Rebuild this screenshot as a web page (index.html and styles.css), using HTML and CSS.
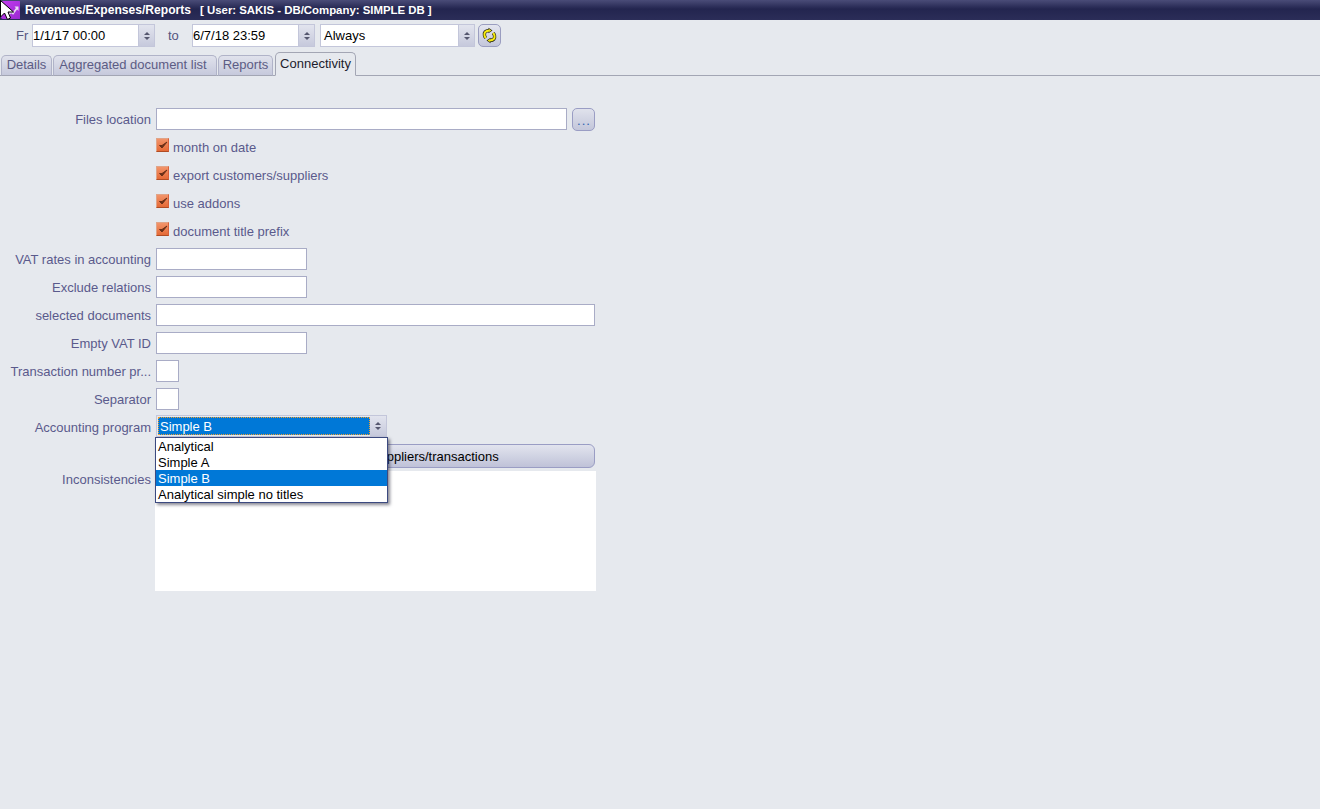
FILE: index.html
```html
<!DOCTYPE html>
<html lang="en">
<head>
<meta charset="utf-8">
<title>Revenues/Expenses/Reports</title>
<link rel="stylesheet" href="styles.css">
</head>
<body>
<div class="window">
  <header class="titlebar">
    <svg class="app-icon" width="20" height="20" viewBox="0 0 20 20"><defs><linearGradient id="ic" x1="0" y1="0" x2="1" y2="1"><stop offset="0" stop-color="#c23cf0"/><stop offset="1" stop-color="#9a28d0"/></linearGradient></defs><rect x="1" y="1" width="20" height="18" rx="2" fill="url(#ic)"/><path d="M8 15L11 12L13 13.500L17 8" fill="none" stroke="#e8d8f4" stroke-width="1.800"/><path d="M14.500 6.500h4v4.500z" fill="#e8d8f4"/></svg>
    <span class="title-main">Revenues/Expenses/Reports</span>
    <span class="title-sub">[ User: SAKIS - DB/Company: SIMPLE DB ]</span>
  </header>
  <div class="toolbar">
    <span class="tb-label from">Fr</span>
    <div class="spin date"><span class="spin-value">1/1/17 00:00</span><span class="spin-btn"><i class="up"></i><i class="down"></i></span></div>
    <span class="tb-label to">to</span>
    <div class="spin date"><span class="spin-value">6/7/18 23:59</span><span class="spin-btn"><i class="up"></i><i class="down"></i></span></div>
    <div class="spin period"><span class="spin-value">Always</span><span class="spin-btn"><i class="up"></i><i class="down"></i></span></div>
    <button class="refresh" type="button" aria-label="Refresh">
      <svg width="17" height="17" viewBox="0 0 17 17"><g fill="none" stroke="#2a2a14" stroke-width="3.400"><path d="M8 3.500Q2.500 4 3.500 8.500Q3.800 9.800 4.800 11"/><path d="M9 13.500Q14.500 13 13.500 8.500Q13.200 7.200 12.200 6"/></g><path d="M7.500 0.800L11.500 3.500L7.500 6.200zM9.500 10.800L5.500 13.500L9.500 16.200z" fill="#2a2a14"/><g fill="none" stroke="#f8ec10" stroke-width="2"><path d="M8.500 3.500Q2.500 4 3.500 8.500Q3.800 9.800 4.800 11"/><path d="M8.500 13.500Q14.500 13 13.500 8.500Q13.200 7.200 12.200 6"/></g><path d="M8.200 2L10.400 3.500L8.200 5zM8.800 12L6.600 13.500L8.800 15z" fill="#f8ec10"/></svg>
    </button>
  </div>
  <nav class="tabs">
    <span class="tab t1">Details</span>
    <span class="tab t2">Aggregated document list</span>
    <span class="tab t3">Reports</span>
    <span class="tab active">Connectivity</span>
  </nav>
  <main class="form">
    <div class="row"><label>Files location</label><div class="field wide-file"></div><button class="browse" type="button">...</button></div>
    <div class="row"><label></label><span class="check"><svg width="12" height="12" viewBox="0 0 12 12"><path d="M2.500 6.500L5 9L10 3L5 6.500z" fill="#6a3018" stroke="#6a3018"/></svg></span><span class="check-text">month on date</span></div>
    <div class="row"><label></label><span class="check"><svg width="12" height="12" viewBox="0 0 12 12"><path d="M2.500 6.500L5 9L10 3L5 6.500z" fill="#6a3018" stroke="#6a3018"/></svg></span><span class="check-text">export customers/suppliers</span></div>
    <div class="row"><label></label><span class="check"><svg width="12" height="12" viewBox="0 0 12 12"><path d="M2.500 6.500L5 9L10 3L5 6.500z" fill="#6a3018" stroke="#6a3018"/></svg></span><span class="check-text">use addons</span></div>
    <div class="row"><label></label><span class="check"><svg width="12" height="12" viewBox="0 0 12 12"><path d="M2.500 6.500L5 9L10 3L5 6.500z" fill="#6a3018" stroke="#6a3018"/></svg></span><span class="check-text">document title prefix</span></div>
    <div class="row"><label>VAT rates in accounting</label><div class="field medium"></div></div>
    <div class="row"><label>Exclude relations</label><div class="field medium"></div></div>
    <div class="row"><label>selected documents</label><div class="field full"></div></div>
    <div class="row"><label>Empty VAT ID</label><div class="field medium"></div></div>
    <div class="row"><label>Transaction number pr...</label><div class="field tiny"></div></div>
    <div class="row"><label>Separator</label><div class="field tiny"></div></div>
    <div class="row combo-row">
      <label>Accounting program</label>
      <div class="combo"><span class="combo-value">Simple B</span><span class="spin-btn"><i class="up"></i><i class="down"></i></span></div>
      <ul class="dropdown">
        <li>Analytical</li>
        <li>Simple A</li>
        <li class="selected">Simple B</li>
        <li>Analytical simple no titles</li>
      </ul>
    </div>
    <div class="row button-row"><label></label><button class="export" type="button">Check all customers/suppliers/transactions</button></div>
    <div class="row notes-row"><label>Inconsistencies</label><div class="notes"></div></div>
  </main>
</div>
<svg class="cursor" width="15" height="21" viewBox="0 0 15 21"><path d="M0.500 0.500V17L4.500 13L7.500 19.500L10.500 18L8 12H13.500z" fill="#fff" stroke="#000" stroke-width="1"/></svg>
</body>
</html>
```
FILE: styles.css
```css
* { box-sizing: border-box; }
html, body { margin: 0; height: 100%; }
body {
  background: #e6e9ee;
  font-family: "Liberation Sans", Arial, sans-serif;
  font-size: 13px;
  color: #5a5a8c;
  overflow: hidden;
  position: relative;
}
.window { height: 809px; }

.titlebar {
  height: 20px;
  display: flex;
  align-items: center;
  background: linear-gradient(#4a4c78, #23254f 45%, #2b2d58);
  color: #fff;
  font-size: 11.4px;
  font-weight: bold;
  white-space: nowrap;
}
.app-icon { flex: none; margin-right: 5px; }
.title-main { font-size: 12.1px; }
.title-sub { margin-left: 9px; }

.toolbar {
  height: 32px;
  padding-top: 4px;
  display: flex;
  align-items: flex-start;
}
.tb-label { line-height: 23px; color: #55557f; }
.tb-label.from { margin-left: 16px; width: 16px; }
.tb-label.to { margin-left: 13px; width: 24px; }
.spin {
  height: 23px;
  display: flex;
  background: #fff;
  border: 1px solid #c3c6da;
  color: #000;
}
.spin.date { width: 123px; }
.spin.period { width: 155px; margin-left: 5px; }
.spin-value { flex: 1; line-height: 21px; }
.period .spin-value { padding-left: 3px; }
.spin-btn {
  flex: none;
  width: 16px;
  display: flex;
  flex-direction: column;
  align-items: center;
  justify-content: center;
  gap: 2px;
  background: linear-gradient(#e2e4ee, #c6c9dc);
  border-left: 1px solid #c3c6da;
}
.spin-btn i { width: 0; height: 0; border-left: 3.5px solid transparent; border-right: 3.5px solid transparent; }
.spin-btn .up { border-bottom: 3.5px solid #55576f; }
.spin-btn .down { border-top: 3.5px solid #55576f; }
.refresh {
  width: 23px;
  height: 23px;
  margin-left: 3px;
  padding: 0;
  display: flex;
  align-items: center;
  justify-content: center;
  border: 1px solid #9a9dc0;
  border-radius: 5px;
  background: linear-gradient(#e4e6f0, #c3c6da);
}

.tabs {
  height: 24px;
  padding-left: 1px;
  display: flex;
  align-items: flex-end;
  border-bottom: 1px solid #a3a6b4;
}
.tab {
  height: 21px;
  margin-right: 1px;
  margin-bottom: -1px;
  border: 1px solid #b0b3c8;
  border-bottom-color: #a3a6b4;
  border-radius: 5px 5px 0 0;
  background: linear-gradient(#e0e2ec, #c6c9dc);
  color: #5c5c84;
  text-align: center;
  line-height: 18px;
  white-space: nowrap;
}
.t1 { width: 51px; }
.t2 { width: 164px; padding-right: 4px; }
.t3 { width: 55px; margin-right: 2px; }
.tab.active {
  width: 81px;
  height: 24px;
  background: #e6e9ee;
  color: #1c1c2c;
  border-color: #a3a6b4;
  border-bottom-color: #e6e9ee;
  line-height: 21px;
}

.form { padding-top: 29px; }
.row {
  height: 28px;
  display: flex;
  align-items: center;
  position: relative;
}
.row label {
  flex: none;
  width: 151px;
  margin-right: 5px;
  text-align: right;
  white-space: nowrap;
  color: #5a5a8c;
}
.field {
  height: 22px;
  background: #fff;
  border: 1px solid #a9acc6;
}
.wide-file { width: 411px; }
.medium { width: 151px; }
.full { width: 439px; }
.tiny { width: 23px; }
.browse {
  width: 23px;
  height: 23px;
  margin-left: 5px;
  padding: 3px 0 0 1px;
  border: 1px solid #9a9dc4;
  border-radius: 5px;
  background: linear-gradient(#e0e2ec, #c3c6da);
  color: #2f62b0;
  font: 13px "Liberation Sans", Arial, sans-serif;
  letter-spacing: 1px;
  line-height: 18px;
}
.check {
  flex: none;
  width: 13px;
  height: 14px;
  margin-top: -4px;
  background: linear-gradient(#f2946a, #e56a36);
  border: 1px solid #e0a488;
  border-right-color: #d9603a;
  border-bottom-color: #b04c24;
  display: flex;
  align-items: center;
  justify-content: center;
}
.check svg { flex: none; }
.check-text { margin-left: 4px; }

.combo {
  width: 231px;
  height: 22px;
  display: flex;
  border: 1px solid #c3c6da;
  background: #e6e9ee;
  margin-top: -2px;
  padding: 1px 0 0 1px;
}
.combo-value {
  flex: 1;
  height: 18px;
  padding-left: 1px;
  line-height: 17px;
  background: #0078d7;
  color: #fff;
  border: 1px dotted #f0a030;
}
.combo .spin-btn { width: 16px; margin-top: -1px; border-left: 0; }
.dropdown {
  position: absolute;
  left: 155px;
  top: 24px;
  width: 233px;
  margin: 0;
  padding: 0;
  list-style: none;
  background: #fff;
  border: 1px solid #3c4a80;
  box-shadow: 2px 2px 3px rgba(40, 40, 60, 0.55);
  color: #000;
  z-index: 2;
}
.dropdown li { height: 16px; line-height: 18px; padding-left: 2px; white-space: nowrap; }
.dropdown .selected { background: #0078d7; color: #fff; }

.button-row { height: 26px; margin-top: 2px; margin-bottom: 2px; align-items: center; }
.export {
  width: 439px;
  height: 24px;
  padding: 0;
  border: 1px solid #9a9dc4;
  border-radius: 6px;
  background: linear-gradient(#e2e4ee, #bfc2d8);
  color: #000;
  font: 13px "Liberation Sans", Arial, sans-serif;
}
.notes-row { height: 120px; align-items: flex-start; }
.notes-row label { line-height: 16px; margin-top: 1px; margin-right: 4px; }
.notes { width: 441px; height: 120px; background: #fff; }

.cursor { position: absolute; left: 0; top: 0; z-index: 5; }
```
